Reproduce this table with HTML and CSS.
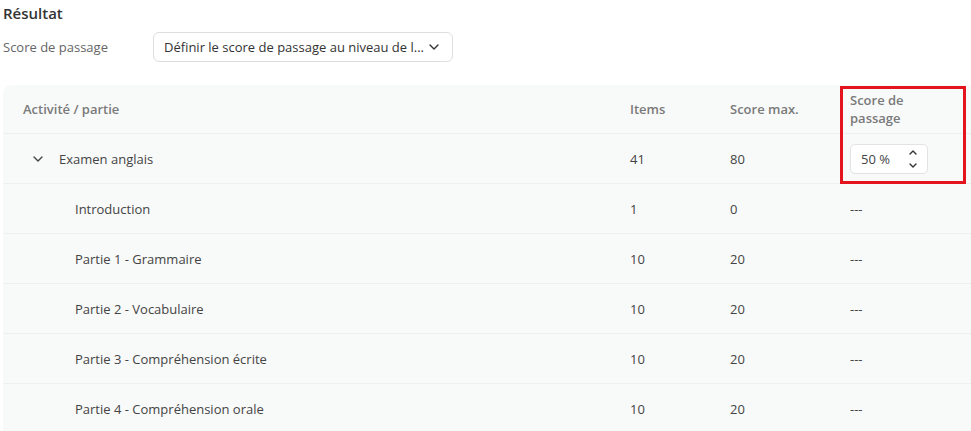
FILE: index.html
```html
<!DOCTYPE html>
<html lang="fr">
<head>
<meta charset="utf-8">
<link rel="stylesheet" href="styles.css">
</head>
<body>
<div class="page">
  <h2 class="title">Résultat</h2>
  <div class="field">
    <span class="field-label">Score de passage</span>
    <div class="select">
      <span class="select-text">Définir le score de passage au niveau de l...</span>
      <svg class="chev" width="10" height="6" viewBox="0 0 10 6"><path d="M1 1l4 4 4-4" fill="none" stroke="#333" stroke-width="1.4" stroke-linecap="round" stroke-linejoin="round"/></svg>
    </div>
  </div>
  <div class="table">
    <div class="row head">
      <div class="c1">Activité / partie</div>
      <div class="c2">Items</div>
      <div class="c3">Score max.</div>
      <div class="c4"><span class="wrap">Score de passage</span></div>
    </div>
    <div class="row">
      <div class="c1 parent">
        <svg class="chev-row" width="10" height="6" viewBox="0 0 10 6"><path d="M1 1l4 4 4-4" fill="none" stroke="#444" stroke-width="1.4" stroke-linecap="round" stroke-linejoin="round"/></svg>
        <span>Examen anglais</span>
      </div>
      <div class="c2">41</div>
      <div class="c3">80</div>
      <div class="c4">
        <div class="num">
          <span>50 %</span>
          <span class="spin">
            <svg width="8" height="5" viewBox="0 0 8 5"><path d="M1 4l3-3 3 3" fill="none" stroke="#333" stroke-width="1.4" stroke-linecap="round" stroke-linejoin="round"/></svg>
            <svg width="8" height="5" viewBox="0 0 8 5"><path d="M1 1l3 3 3-3" fill="none" stroke="#333" stroke-width="1.4" stroke-linecap="round" stroke-linejoin="round"/></svg>
          </span>
        </div>
      </div>
    </div>
    <div class="row"><div class="c1 child">Introduction</div><div class="c2">1</div><div class="c3">0</div><div class="c4">---</div></div>
    <div class="row"><div class="c1 child">Partie 1 - Grammaire</div><div class="c2">10</div><div class="c3">20</div><div class="c4">---</div></div>
    <div class="row"><div class="c1 child">Partie 2 - Vocabulaire</div><div class="c2">10</div><div class="c3">20</div><div class="c4">---</div></div>
    <div class="row"><div class="c1 child">Partie 3 - Compréhension écrite</div><div class="c2">10</div><div class="c3">20</div><div class="c4">---</div></div>
    <div class="row"><div class="c1 child">Partie 4 - Compréhension orale</div><div class="c2">10</div><div class="c3">20</div><div class="c4">---</div></div>
    <div class="highlight"></div>
  </div>
</div>
</body>
</html>
```
FILE: styles.css
```css
html, body {
  margin: 0;
  padding: 0;
  background: #fff;
  overflow: hidden;
}
body {
  font-family: "Open Sans", "Noto Sans", sans-serif;
  font-size: 13px;
  color: #444;
}
.page {
  padding: 3px 0 0 3px;
}
.title {
  margin: 0;
  font-size: 15px;
  font-weight: 600;
  color: #333;
  line-height: 20px;
}
.field {
  display: flex;
  align-items: center;
  margin-top: 9px;
}
.field-label {
  width: 150px;
  color: #666;
}
.select {
  width: 300px;
  height: 30px;
  box-sizing: border-box;
  border: 1px solid #dedede;
  border-radius: 6px;
  display: flex;
  align-items: center;
  justify-content: space-between;
  padding: 0 13px 0 10px;
  color: #333;
}
.table {
  position: relative;
  margin-top: 23px;
  width: 990px;
  background: #f8f9f9;
  border-top-left-radius: 8px;
}
.row {
  display: grid;
  grid-template-columns: 607px 100px 120px 1fr;
  padding-left: 20px;
  height: 50px;
  align-items: center;
  border-bottom: 1px solid #eef0f0;
  box-sizing: border-box;
}
.row.head {
  height: 49px;
  font-weight: 600;
  color: #7a7a7a;
}
.wrap {
  display: block;
  width: 70px;
  line-height: 18px;
}
.parent {
  display: flex;
  align-items: center;
  padding-left: 10px;
}
.chev-row {
  margin-right: 16px;
}
.child {
  padding-left: 52px;
}
.num {
  width: 78px;
  height: 30px;
  box-sizing: border-box;
  background: #fff;
  border: 1px solid #e3e3e3;
  border-radius: 5px;
  display: flex;
  align-items: center;
  justify-content: space-between;
  padding: 1px 10px 0 10px;
  color: #444;
}
.spin {
  display: flex;
  flex-direction: column;
  gap: 8px;
}
.spin svg {
  display: block;
}
.highlight {
  position: absolute;
  left: 837px;
  top: 1px;
  width: 126px;
  height: 98px;
  box-sizing: border-box;
  border: 3px solid #e3141d;
}
```
